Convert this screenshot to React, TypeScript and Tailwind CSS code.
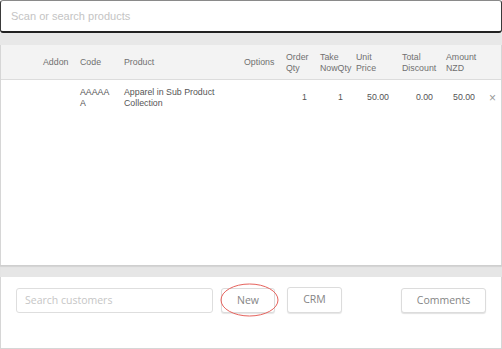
import React from "react";

const cols = [
  { w: 36, label: "" },
  { w: 37, label: "Addon" },
  { w: 44, label: "Code" },
  { w: 120, label: "Product" },
  { w: 42, label: "Options" },
  { w: 34, label: "Order Qty" },
  { w: 36, label: "Take NowQty" },
  { w: 46, label: "Unit Price" },
  { w: 44, label: "Total Discount" },
  { w: 42, label: "Amount NZD" },
  { w: 20, label: "" },
];

const rowVals: { v: string; right?: boolean; breakAll?: boolean }[] = [
  { v: "" },
  { v: "" },
  { v: "AAAAAA", breakAll: true },
  { v: "Apparel in Sub Product Collection" },
  { v: "" },
  { v: "1", right: true },
  { v: "1", right: true },
  { v: "50.00", right: true },
  { v: "0.00", right: true },
  { v: "50.00", right: true },
  { v: "×" },
];

export default function App() {
  const sans = { fontFamily: '"Liberation Sans", Arial, sans-serif' };
  const open = { fontFamily: '"Open Sans", "Noto Sans", sans-serif' };
  return (
    <div className="w-[502px] h-[349px] bg-white flex flex-col overflow-hidden" style={sans}>
      <div className="h-[33px] shrink-0 rounded-[3px] border border-[#3a3a3a] border-t-[#8a8a8a] border-b-2 border-b-[#222] flex items-center pl-[10px] bg-white">
        <span className="text-[11px] text-[#c4c4c4]">Scan or search products</span>
      </div>
      <div className="h-[12px] shrink-0 bg-[#e8e8e8]" />
      <div className="flex-1 flex flex-col border-x border-[#d6d6d6] bg-white min-h-0">
        <div className="h-[35px] shrink-0 flex items-center bg-[#f3f3f3] border-b border-[#dcdcdc] text-[8.8px] leading-[11px] text-[#707070]">
          {cols.map((c, i) => (
            <div key={i} className="shrink-0 pl-[6px] pr-[7px] pt-[1px]" style={{ width: c.w }}>
              {c.label}
            </div>
          ))}
        </div>
        <div className="h-[35px] shrink-0 flex items-center text-[8.8px] leading-[11px] text-[#555]">
          {cols.map((c, i) => {
            const r = rowVals[i];
            if (r.v === "×") {
              return (
                <div key={i} className="shrink-0 pl-[7px] text-[12px] text-[#999] leading-none" style={{ width: c.w }}>
                  ×
                </div>
              );
            }
            return (
              <div
                key={i}
                className={
                  "shrink-0 pl-[6px] pr-[7px] " +
                  (r.right ? "text-right " : "") +
                  (r.breakAll ? "break-all " : "")
                }
                style={{ width: c.w }}
              >
                {r.v}
              </div>
            );
          })}
        </div>
        <div className="flex-1" />
      </div>
      <div className="h-[12px] shrink-0 bg-[#e6e6e6] border-t border-[#cfcfcf] shadow-[inset_0_1px_1px_rgba(0,0,0,0.08)]" />
      <div className="h-[72px] shrink-0 border-x border-b border-[#d6d6d6] flex items-start pt-[11px] pl-[15px] relative" style={open}>
        <div className="w-[197px] h-[25px] rounded-[3px] border border-[#dedede] flex items-center pl-[8px] text-[10.5px] text-[#c6c6c6]">
          Search customers
        </div>
        <button className="ml-[8px] w-[54px] h-[25px] rounded-[3px] border border-[#dcdcdc] shadow-[0_1px_1px_rgba(0,0,0,0.1)] text-[10.5px] text-[#858585] flex items-center justify-center bg-white">
          New
        </button>
        <button className="ml-[12px] -mt-[1px] w-[55px] h-[26px] rounded-[3px] border border-[#dcdcdc] shadow-[0_1px_1px_rgba(0,0,0,0.1)] text-[10.5px] text-[#858585] flex items-center justify-center bg-white">
          CRM
        </button>
        <button className="ml-[59px] w-[85px] h-[25px] rounded-[3px] border border-[#dcdcdc] shadow-[0_1px_1px_rgba(0,0,0,0.12)] text-[10.5px] text-[#858585] flex items-center justify-center bg-white">
          Comments
        </button>
        <svg className="absolute left-[219px] top-[6px]" width="59" height="34" viewBox="0 0 59 34">
          <ellipse cx="29.5" cy="17" rx="28.5" ry="16" fill="none" stroke="#e6625c" strokeWidth="1" />
        </svg>
      </div>
    </div>
  );
}
